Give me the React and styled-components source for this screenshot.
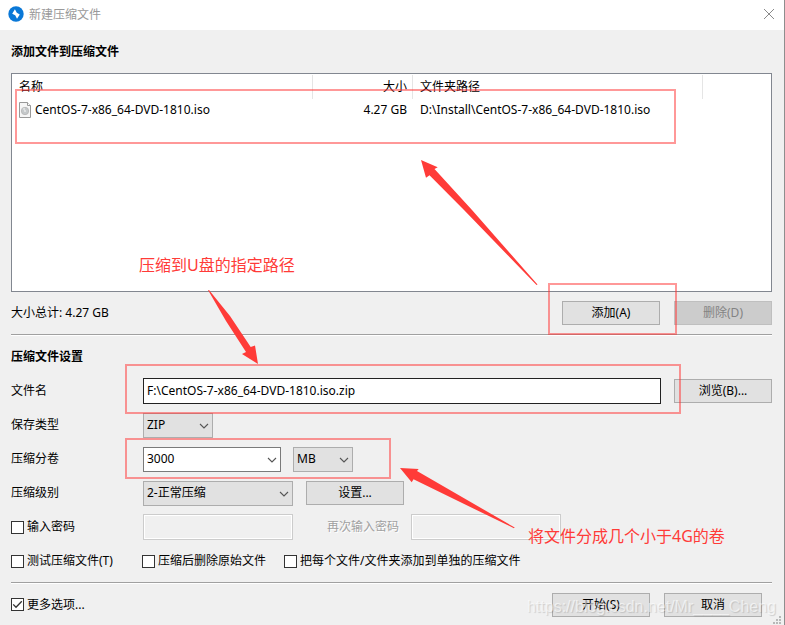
import React, { useState } from "react";
import styled, { createGlobalStyle, css } from "styled-components";

const GlobalStyle = createGlobalStyle`
  * {
    box-sizing: border-box;
  }

  body {
    margin: 0;
    background: #f0f0f0;
  }

  body, button, input, select {
    font-family: "Noto Sans", "Noto Sans CJK SC", sans-serif;
    font-size: 12px;
    line-height: 16px;
    color: #000;
  }
`;

const Dialog = styled.main`
  position: relative;
  min-height: 100vh;
  overflow: hidden;
  background: #f0f0f0;
  border-right: 1px solid #8e8e8e;
`;

const TitleBar = styled.header`
  display: flex;
  align-items: center;
  gap: 5px;
  height: 30px;
  padding: 0 9px 2px 8px;
  background: #fff;
`;

const Title = styled.h1`
  flex: 1;
  margin: 0;
  padding-top: 2px;
  font-size: 12px;
  font-weight: 400;
  color: #999;
`;

const CloseButton = styled.button`
  display: flex;
  padding: 0;
  border: 0;
  background: none;
`;

const Body = styled.div`
  padding: 0 12px 0 11px;
`;

const Heading = styled.h2`
  display: flex;
  align-items: center;
  height: ${(props) => (props.$tall ? "43px" : "38px")};
  margin: 0;
  padding-top: ${(props) => (props.$tall ? "0" : "4px")};
  font-size: 12px;
  font-weight: 700;
`;

const FileList = styled.div`
  min-height: 219px;
  background: #fff;
  border: 1px solid #828790;
`;

const Table = styled.table`
  width: 100%;
  table-layout: fixed;
  border-collapse: collapse;
`;

const HeadCell = styled.th`
  width: ${(props) => props.$width || "auto"};
  height: 25px;
  padding: 0 6px 0 7px;
  text-align: ${(props) => props.$align || "left"};
  font-weight: 400;
  background: ${(props) =>
    props.$width
      ? "linear-gradient(#e5e5e5, #e5e5e5) right bottom / 1px 24px no-repeat"
      : "none"};
`;

const Cell = styled.td`
  height: 22px;
  padding: 0 6px 0 7px;
  text-align: ${(props) => props.$align || "left"};
  white-space: nowrap;
`;

const FileName = styled.span`
  display: flex;
  align-items: center;
  gap: 4px;
`;

const Row = styled.div`
  display: flex;
  align-items: center;
  height: ${(props) => props.$height || "34px"};
`;

const Total = styled.span`
  flex: 1;
`;

const Buttons = styled.div`
  display: flex;
  gap: 14px;
  margin-left: auto;
  padding-right: ${(props) => (props.$inset ? "10px" : "0")};
`;

const Button = styled.button`
  flex: none;
  width: 98px;
  height: 24px;
  padding: 0;
  background: #e1e1e1;
  border: 1px solid #adadad;

  &:disabled {
    color: #838383;
    background: #ccc;
    border-color: #bfbfbf;
  }
`;

const Separator = styled.hr`
  height: 2px;
  margin: ${(props) => (props.$spaced ? "4px 0 0" : "0")};
  border: 0;
  border-top: 1px solid #a0a0a0;
  background: #fff;
`;

const Label = styled.label`
  flex: none;
  width: 132px;
`;

const DisabledLabel = styled.label`
  padding: 0 12px 0 34px;
  color: #a0a0a0;
  text-shadow: 1px 1px #fff;
`;

const inputBox = css`
  height: 26px;
  padding: 0 3px 2px;
  border: 1px solid #222;
  border-radius: 0;
  background: #fff;
`;

const FileInput = styled.input`
  ${inputBox}
  flex: 1;
  min-width: 0;
  margin-right: 13px;
`;

const PasswordInput = styled.input`
  ${inputBox}
  width: 150px;

  &:disabled {
    background: #f0f0f0;
    border-color: #ccc;
    box-shadow: inset 0 0 0 1px #fff;
  }
`;

const Picker = styled.div`
  position: relative;
  display: flex;
  width: ${(props) => props.$width};
  margin-right: ${(props) => props.$gap || "0"};

  svg {
    position: absolute;
    right: 4px;
    top: 10px;
    pointer-events: none;
  }
`;

const Select = styled.select`
  appearance: none;
  width: 100%;
  height: 25px;
  padding: 0 16px 0 3px;
  border: 1px solid #adadad;
  border-radius: 0;
  background: #e1e1e1;
`;

const ComboInput = styled.input`
  ${inputBox}
  width: 100%;
  height: 25px;
  border-color: #7a7a7a;
`;

const CheckRow = styled.div`
  display: grid;
  grid-template-columns: 131px 142px 1fr;
  align-items: center;
  height: 34px;
`;

const CheckLabel = styled.label`
  display: flex;
  align-items: center;
  gap: 3px;
  white-space: nowrap;
`;

const CheckMark = styled.span`
  display: flex;
  width: 13px;
  height: 13px;
  background: #fff;
  border: 1px solid #333;

  svg {
    visibility: hidden;
  }
`;

const CheckInput = styled.input`
  position: absolute;
  width: 13px;
  height: 13px;
  margin: 0;
  opacity: 0;

  &:checked + ${CheckMark} svg {
    visibility: visible;
  }
`;

const CheckColumn = styled.div`
  flex: none;
  width: 132px;
`;

const Grip = styled.svg`
  position: absolute;
  right: 2px;
  bottom: 0;
`;

const Marks = styled.svg`
  position: absolute;
  left: 0;
  top: 0;
  pointer-events: none;
`;

const Note = styled.span`
  position: absolute;
  left: ${(props) => props.$left};
  top: ${(props) => props.$top};
  font-size: 16px;
  line-height: 24px;
  color: #ff3b38;
  white-space: nowrap;
`;

const Watermark = styled.span`
  position: absolute;
  right: 8px;
  bottom: 8px;
  font-family: "Liberation Sans", sans-serif;
  font-size: 16px;
  line-height: 20px;
  color: rgba(255, 255, 255, 0.6);
  text-shadow: 1px 1px 1px rgba(0, 0, 0, 0.14);
  pointer-events: none;
`;

const Logo = () => (
  <svg width="16" height="16" viewBox="0 0 16 16">
    <circle cx="8" cy="8" r="7.7" fill="#0a78d7" />
    <path d="M6.9 3.2 8.8 6.8 11.8 8.4 9 12.8 7.2 9.2 4.2 7.7z" fill="#fff" />
  </svg>
);

const CloseIcon = () => (
  <svg width="12" height="12" viewBox="0 0 12 12">
    <path d="M1 1 11 11M11 1 1 11" stroke="#8a8a8a" />
  </svg>
);

const Chevron = () => (
  <svg width="10" height="6" viewBox="0 0 10 6">
    <path d="M1 1 5 5 9 1" fill="none" stroke="#555" strokeWidth="1.1" />
  </svg>
);

const DiscFile = () => (
  <svg width="12" height="16" viewBox="0 0 12 16">
    <path d="M.5.5H8.5L11.5 3.5V15.5H.5z" fill="#f6f6f6" stroke="#999" />
    <path d="M8.5.5V3.5H11.5" fill="#fff" stroke="#999" />
    <circle cx="6" cy="9" r="3.7" fill="#c4c8ca" stroke="#b4b4b4" strokeWidth=".8" />
    <path d="M6 9 3.5 7A3.2 3.2 0 0 1 6 5.8z" fill="#dfe1e2" />
    <circle cx="6" cy="9" r="1" fill="#e8e8e8" />
  </svg>
);

const Check = ({ children, defaultChecked = false }) => {
  const [checked, setChecked] = useState(defaultChecked);
  return (
    <CheckLabel>
      <CheckInput
        type="checkbox"
        checked={checked}
        onChange={() => setChecked(!checked)}
      />
      <CheckMark>
        <svg width="11" height="11" viewBox="0 0 11 11">
          <path d="M1.2 5.4 4 8.2 9.8 2.2" fill="none" stroke="#333" strokeWidth="1.3" />
        </svg>
      </CheckMark>
      {children}
    </CheckLabel>
  );
};

const Annotations = () => (
  <>
    <Marks width="785" height="625">
      <g fill="none" stroke="#ff3232" strokeOpacity=".5" strokeWidth="2">
        <rect x="16" y="90" width="659" height="53" />
        <rect x="549" y="284" width="127" height="50" />
        <rect x="126" y="365" width="554" height="48" />
        <rect x="126" y="439" width="264" height="39" />
      </g>
      <g fill="#ff3b38">
        <path d="M421 160 437.7 167.3 434.5 169 472 210 537.5 284.5 536.5 285 464 210 429.5 175.3 426 177.7z" />
        <path d="M208 290 209 290 230 316 250.7 347 255 345.5 258 364 242 354 246 352 226 321z" />
        <path d="M400 468 418.7 469 417 471 514.7 527.5 514 528.3 413.5 479.3 411.7 482.3z" />
      </g>
    </Marks>
    <Note $left="139px" $top="253px">压缩到U盘的指定路径</Note>
    <Note $left="528px" $top="524px">将文件分成几个小于4G的卷</Note>
    <Watermark>https://blog.csdn.net/Mr____Cheng</Watermark>
  </>
);

export default () => {
  return (
    <Dialog>
      <GlobalStyle />
      <TitleBar>
        <Logo />
        <Title>新建压缩文件</Title>
        <CloseButton aria-label="关闭">
          <CloseIcon />
        </CloseButton>
      </TitleBar>
      <Body>
        <Heading $tall>添加文件到压缩文件</Heading>
        <FileList>
          <Table>
            <thead>
              <tr>
                <HeadCell $width="301px">名称</HeadCell>
                <HeadCell $width="100px" $align="right">大小</HeadCell>
                <HeadCell $width="290px">文件夹路径</HeadCell>
                <HeadCell as="td" />
              </tr>
            </thead>
            <tbody>
              <tr>
                <Cell>
                  <FileName>
                    <DiscFile />
                    CentOS-7-x86_64-DVD-1810.iso
                  </FileName>
                </Cell>
                <Cell $align="right">4.27 GB</Cell>
                <Cell>D:\Install\CentOS-7-x86_64-DVD-1810.iso</Cell>
                <Cell />
              </tr>
            </tbody>
          </Table>
        </FileList>
        <Row $height="42px">
          <Total>大小总计: 4.27 GB</Total>
          <Buttons>
            <Button>添加(A)</Button>
            <Button disabled>删除(D)</Button>
          </Buttons>
        </Row>
        <Separator />
        <Heading>压缩文件设置</Heading>
        <Row>
          <Label htmlFor="file">文件名</Label>
          <FileInput id="file" defaultValue="F:\CentOS-7-x86_64-DVD-1810.iso.zip" />
          <Button>浏览(B)...</Button>
        </Row>
        <Row>
          <Label htmlFor="type">保存类型</Label>
          <Picker $width="70px">
            <Select id="type">
              <option>ZIP</option>
            </Select>
            <Chevron />
          </Picker>
        </Row>
        <Row>
          <Label htmlFor="volume">压缩分卷</Label>
          <Picker $width="138px" $gap="12px">
            <ComboInput id="volume" defaultValue="3000" />
            <Chevron />
          </Picker>
          <Picker $width="60px">
            <Select aria-label="单位">
              <option>MB</option>
            </Select>
            <Chevron />
          </Picker>
        </Row>
        <Row>
          <Label htmlFor="level">压缩级别</Label>
          <Picker $width="150px" $gap="13px">
            <Select id="level">
              <option>2-正常压缩</option>
            </Select>
            <Chevron />
          </Picker>
          <Button>设置...</Button>
        </Row>
        <Row>
          <CheckColumn>
            <Check>输入密码</Check>
          </CheckColumn>
          <PasswordInput type="password" aria-label="输入密码" disabled />
          <DisabledLabel htmlFor="repeat">再次输入密码</DisabledLabel>
          <PasswordInput id="repeat" type="password" disabled />
        </Row>
        <CheckRow>
          <Check>测试压缩文件(T)</Check>
          <Check>压缩后删除原始文件</Check>
          <Check>把每个文件/文件夹添加到单独的压缩文件</Check>
        </CheckRow>
        <Separator $spaced />
        <Row $height="41px">
          <Check defaultChecked>更多选项...</Check>
          <Buttons $inset>
            <Button>开始(S)</Button>
            <Button>取消</Button>
          </Buttons>
        </Row>
      </Body>
      <Grip width="11" height="9" fill="#b8b8b8">
        <path d="M8 0h2v2h-2zM8 3h2v2h-2zM5 3h2v2h-2zM8 6h2v2h-2zM5 6h2v2h-2zM2 6h2v2h-2z" />
      </Grip>
      <Annotations />
    </Dialog>
  );
};
